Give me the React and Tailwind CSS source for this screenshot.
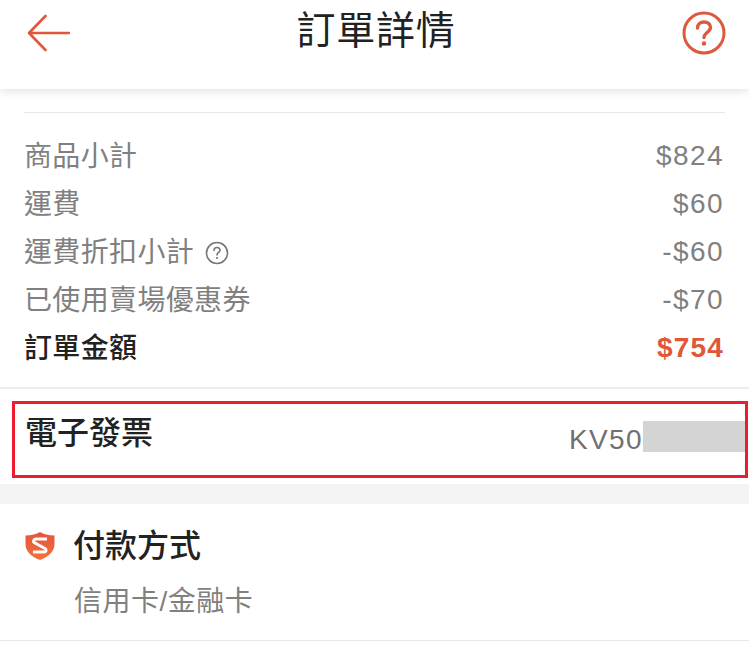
import React from "react";

const font = { fontFamily: '"Liberation Sans", "Noto Sans CJK TC", sans-serif' };

const rows = [
  { label: "商品小計", value: "$824" },
  { label: "運費", value: "$60" },
  { label: "運費折扣小計", value: "-$60", help: true },
  { label: "已使用賣場優惠券", value: "-$70" },
];

const ShieldIcon = () => (
  <svg width="30" height="30" viewBox="0 0 30 30">
    <defs>
      <linearGradient id="shield" x1="0" y1="0" x2="0" y2="1">
        <stop offset="0" stopColor="#e4553a" />
        <stop offset="1" stopColor="#f4703c" />
      </linearGradient>
    </defs>
    <path d="M15 1 C18.5 3.2 23.5 4.4 29.5 4.6 V13 C29.5 20.5 23.5 26 15 29 C6.5 26 0.5 20.5 0.5 13 V4.6 C6.5 4.4 11.500 3.2 15 1 Z" fill="url(#shield)" />
    <path d="M22 8 H11.5 C8.5 8 7.5 10.500 10 12 L20 17.500 C22 18.800 21 21 19 21 H8" fill="none" stroke="#fff" strokeWidth="3" strokeLinejoin="round" />
  </svg>
);

export default function App() {
  return (
    <div className="w-[749px] h-[645px] overflow-hidden bg-white" style={font}>
      <header className="h-[89px] flex items-start justify-between pl-[27px] pr-[23px] shadow-[0_2px_10px_rgba(0,0,0,0.12)]">
        <svg className="mt-[14px]" width="43" height="38" viewBox="0 0 43 38" fill="none" stroke="#e0583a" strokeWidth="2.6" strokeLinecap="round" strokeLinejoin="round">
          <path d="M42 19 H2 M18.5 2 L2 19 L18.5 36" />
        </svg>
        <h1 className="mt-[7px] text-[39px] leading-[48px] tracking-[0.8px] font-normal text-[#222]">訂單詳情</h1>
        <svg className="mt-[11px]" width="44" height="44" viewBox="0 0 44 44" fill="none">
          <circle cx="22" cy="22" r="20" stroke="#dd5a3e" strokeWidth="3" />
          <path d="M15.5 17 C15.5 13 18.5 11 22 11 C25.5 11 28.5 13 28.5 16.5 C28.5 21 22 21.5 22 26.5" stroke="#dd5a3e" strokeWidth="3.4" strokeLinecap="round" />
          <circle cx="22" cy="32.5" r="2.2" fill="#dd5a3e" />
        </svg>
      </header>

      <section className="mx-[24px] mt-[23px] border-t border-[#e8e8e8] pt-[20px]">
        {rows.map((row) => (
          <div key={row.label} className="h-[48px] flex items-center justify-between text-[28px] text-[#808080]">
            <div className="flex items-center gap-[11px]">
              <span className="tracking-[0.35px]">{row.label}</span>
              {row.help && (
                <svg width="24" height="24" viewBox="0 0 24 24" fill="none">
                  <circle cx="12" cy="12" r="10.5" stroke="#777" strokeWidth="1.6" />
                  <path d="M9 9.5 C9 7.5 10.5 6.5 12 6.5 C13.5 6.5 15 7.5 15 9.2 C15 11.4 12 11.6 12 14" stroke="#777" strokeWidth="1.6" strokeLinecap="round" />
                  <circle cx="12" cy="17" r="1.1" fill="#777" />
                </svg>
              )}
            </div>
            <span className="mr-[1px] mb-[2px] tracking-[1.4px]">{row.value}</span>
          </div>
        ))}
        <div className="h-[48px] flex items-center justify-between text-[28px]">
          <span className="font-medium tracking-[0.35px] text-[#222]">訂單金額</span>
          <span className="mr-[1px] mb-[2px] font-bold tracking-[1.2px] text-[#e0583a]">$754</span>
        </div>
      </section>

      <div className="mt-[14px] border-t-2 border-[#ececec] pt-[12px] pb-[6px]">
        <div className="ml-[12px] mr-[1px] h-[77px] border-[3px] border-[#ee1c2e] flex justify-between pl-[10px] pr-0">
          <span className="mt-[7px] text-[32px] leading-[44px] font-medium text-[#222]">電子發票</span>
          <div className="mt-[15px] flex items-start">
            <span className="mt-[1px] text-[28px] leading-[40px] text-[#707070] tracking-[1.4px]">KV50</span>
            <div className="w-[102px] h-[31px] mt-[2px] bg-[#d4d4d4]" />
          </div>
        </div>
      </div>

      <div className="h-[20px] bg-[#f4f4f4]" />

      <section className="pl-[25px] pt-[20px]">
        <div className="flex items-center gap-[18px]">
          <ShieldIcon />
          <span className="text-[32px] leading-[44px] font-medium text-[#222]">付款方式</span>
        </div>
        <p className="ml-[49px] mt-[14px] text-[28px] leading-[40px] tracking-[0.5px] text-[#808080]">信用卡/金融卡</p>
      </section>
      <div className="mt-[18px] border-t border-[#e8e8e8]" />
    </div>
  );
}
